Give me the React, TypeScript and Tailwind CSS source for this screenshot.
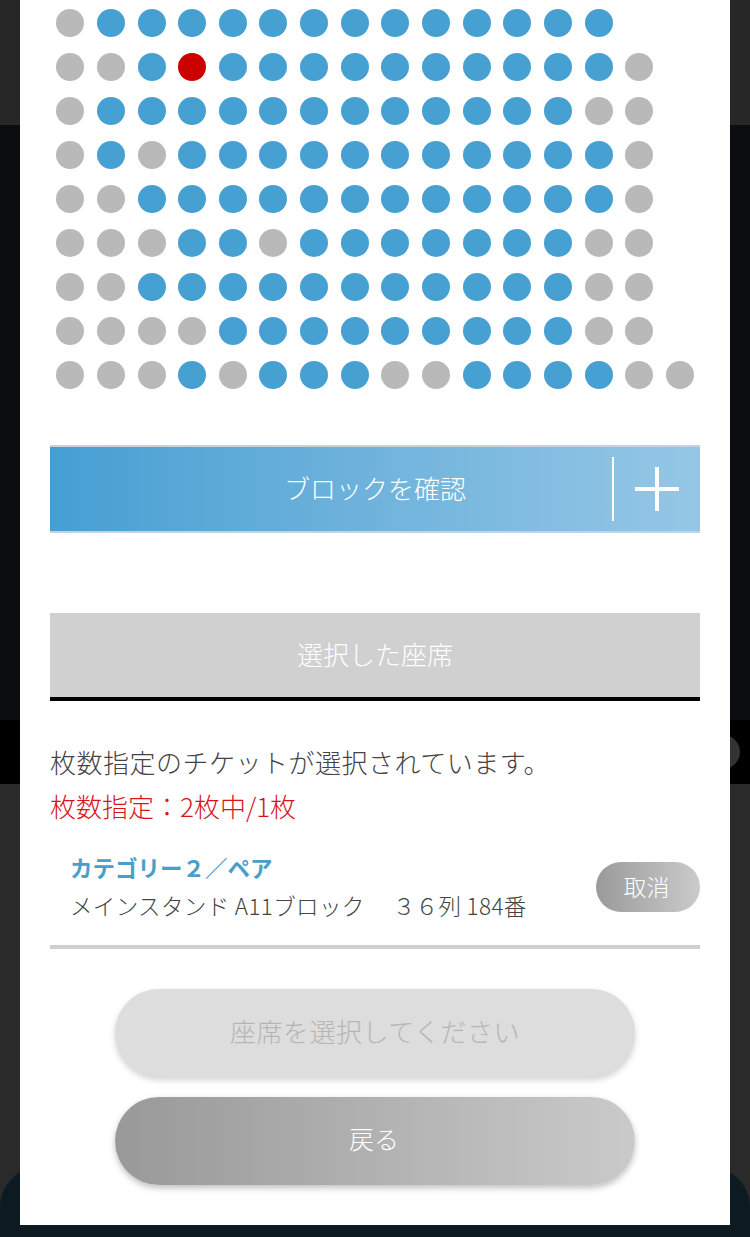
const seatRows = [
  "gbbbbbbbbbbbbb__",
  "ggbrbbbbbbbbbbg_",
  "gbbbbbbbbbbbbgg_",
  "gbgbbbbbbbbbbbg_",
  "ggbbbbbbbbbbbbg_",
  "gggbbgbbbbbbbgg_",
  "ggbbbbbbbbbbbgg_",
  "ggggbbbbbbbbbgg_",
  "gggbgbbbggbbbbgg",
];

function Seat({ type }: { type: string }) {
  if (type === "_") return <div className="h-7 w-7" />;
  if (type === "r") return <div className="h-7 w-7 rounded-full bg-[#cc0000]" />;
  if (type === "b") return <div className="h-7 w-7 rounded-full bg-[#46a0d1]" />;
  return <div className="h-7 w-7 rounded-full bg-[#b9b9b9]" />;
}

export default function App() {
  return (
    <div className="relative flex h-[1237px] w-[750px] flex-col overflow-hidden bg-[#2a2a2a] font-['Noto_Sans_CJK_JP',sans-serif]">
      <div className="h-[125px] bg-[#272727]" />
      <div className="h-[595px] bg-[#0b0d11]" />
      <div className="flex h-[64px] items-center justify-end bg-black pr-[10px]">
        <div className="h-[34px] w-[34px] rounded-full bg-[#333333]" />
      </div>
      <div className="flex flex-1 flex-col justify-end">
        <div className="h-[70px] rounded-t-[40px] bg-[#0d1a22]" />
      </div>

      <div className="absolute left-[20px] top-0 h-[1225px] w-[710px] bg-white px-[30px] pt-[9px]">
        <div className="grid grid-cols-[repeat(16,28px)] gap-x-[12.67px] gap-y-4 pl-[6.2px]">
          {seatRows.map((row, r) =>
            row.split("").map((type, c) => <Seat key={r + "-" + c} type={type} />)
          )}
        </div>

        <div className="mt-[56px] flex h-[88px] items-center border-y-2 border-[#c6d3dc] bg-gradient-to-r from-[#459fd2] to-[#95c7e6] text-white">
          <div className="flex-1 pb-[4px] pl-[88px] text-center text-[26px] font-light">ブロックを確認</div>
          <div className="h-[64px] w-[2px] bg-white" />
          <div className="flex w-[86px] items-center justify-center">
            <svg width="44" height="44" viewBox="0 0 44 44" fill="none" stroke="white" strokeWidth="4">
              <path d="M22 0V44M0 22H44" />
            </svg>
          </div>
        </div>

        <div className="mt-[80px] flex h-[88px] items-center justify-center border-b-4 border-black bg-[#d0d0d0] pb-[4px] text-[26px] font-light text-white">
          選択した座席
        </div>

        <div className="mt-[39px] text-[26px] font-light leading-[44px]">
          <p className="tracking-[0.5px] text-[#444444]">枚数指定のチケットが選択されています。</p>
          <p className="text-[#d7141a]">枚数指定：2枚中/1枚</p>
        </div>

        <div className="mt-[21px] flex items-center justify-between pl-[20px]">
          <div>
            <p className="text-[22.5px] font-bold leading-[37px] text-[#4a9fc9]">カテゴリー２／ペア</p>
            <p className="whitespace-pre text-[22.5px] font-light leading-[39px] tracking-[0.35px] text-[#444444]">メインスタンド A11ブロック　 ３６列 184番</p>
          </div>
          <div className="flex h-[50px] w-[104px] items-center justify-center rounded-full bg-gradient-to-r from-[#9a9a9a] to-[#cbcbcb] pb-[2px] pr-[3px] text-[23px] font-light text-white">
            取消
          </div>
        </div>

        <div className="mt-[20px] h-[4px] bg-[#cfcfcf]" />

        <div className="mx-auto mt-[40px] flex w-[520px] flex-col gap-5">
          <div className="flex h-[88px] items-center justify-center rounded-full bg-[#dddddd] pb-[5px] text-[26px] font-light tracking-[0.5px] text-[#b5b5b5] shadow-[0_3px_6px_rgba(0,0,0,0.18)]">
            座席を選択してください
          </div>
          <div className="flex h-[88px] items-center justify-center rounded-full bg-gradient-to-r from-[#999999] to-[#cacaca] pb-[4px] pr-[2px] text-[25px] font-light text-white shadow-[0_3px_6px_rgba(0,0,0,0.25)]">
            戻る
          </div>
        </div>
      </div>
    </div>
  );
}
